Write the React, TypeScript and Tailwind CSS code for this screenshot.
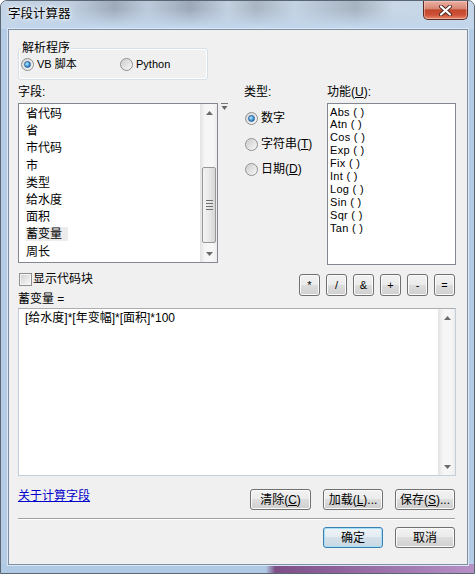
import React from "react";

const ui = "font-['Liberation_Sans','Noto_Sans_CJK_SC',sans-serif] text-[12px] text-black";

const btnNormal =
  "flex items-center justify-center rounded-[3px] border border-[#707070] bg-[linear-gradient(#f2f2f2_0%,#ebebeb_49%,#dddddd_50%,#cfcfcf_100%)] shadow-[inset_0_0_0_1px_#fbfbfb] leading-none";
const btnDefault =
  "flex items-center justify-center rounded-[3px] border border-[#3c7fb1] bg-[linear-gradient(#eef4f8_0%,#e3ecf2_49%,#d4e1ea_50%,#c9d8e3_100%)] shadow-[inset_0_0_0_1px_#a6def7] leading-none";

const fields = ["省代码", "省", "市代码", "市", "类型", "给水度", "面积", "蓄变量", "周长"];
const funcs = ["Abs ( )", "Atn ( )", "Cos ( )", "Exp ( )", "Fix ( )", "Int ( )", "Log ( )", "Sin ( )", "Sqr ( )", "Tan ( )"];
const ops = ["*", "/", "&", "+", "-", "="];

function Radio({ checked }: { checked?: boolean }) {
  return (
    <span className="flex h-[13px] w-[13px] shrink-0 items-center justify-center rounded-full border border-[#8e8f8f] bg-[linear-gradient(135deg,#d4d4d4,#f7f7f7)]">
      {checked ? (
        <span className="h-[7px] w-[7px] rounded-full border border-[#24609c] bg-[radial-gradient(circle_at_35%_35%,#b5e8fd,#3f93d6_60%,#1b5a96)]" />
      ) : (
        <span className="h-[9px] w-[9px] rounded-full bg-[linear-gradient(135deg,#cfcfcf,#f4f4f4)]" />
      )}
    </span>
  );
}

function Arrow({ up }: { up?: boolean }) {
  return (
    <svg width="7" height="4" viewBox="0 0 7 4">
      <path d={up ? "M0 4 L3.5 0 L7 4 Z" : "M0 0 L7 0 L3.5 4 Z"} fill="#6b6b6b" />
    </svg>
  );
}

function ScrollBar({ thumb }: { thumb?: boolean }) {
  return (
    <div className="flex w-[17px] shrink-0 flex-col border-l border-[#e4e4e4] bg-[linear-gradient(90deg,#e6e6e6,#f6f6f6_25%,#f6f6f6_75%,#ececec)]">
      <div className="flex h-[17px] items-center justify-center">
        <Arrow up />
      </div>
      <div className="flex-1">
        {thumb && (
          <div className="mx-[1px] mt-[46px] flex h-[76px] flex-col items-center justify-center gap-[2px] rounded-[2px] border border-[#979797] bg-[linear-gradient(90deg,#f4f4f4,#e8e8e8_50%,#d6d6d6)]">
            <span className="h-px w-[7px] bg-[#6f6f6f]" />
            <span className="h-px w-[7px] bg-[#6f6f6f]" />
            <span className="h-px w-[7px] bg-[#6f6f6f]" />
            <span className="h-px w-[7px] bg-[#6f6f6f]" />
          </div>
        )}
      </div>
      <div className="flex h-[17px] items-center justify-center">
        <Arrow />
      </div>
    </div>
  );
}

export default function App() {
  return (
    <div
      className={`${ui} flex h-[574px] w-[475px] flex-col overflow-hidden rounded-t-[7px] border border-[#5a6672] [background:linear-gradient(90deg,#b0c9e4_0%,#b0c9e4_56%,#7d4f86_58%,#b690c6_100%)_bottom/100%_9px_no-repeat,#b5cce6]`}
    >
      {/* TITLE BAR */}
      <div className="flex h-[28px] shrink-0 items-start [background:linear-gradient(180deg,rgba(197,214,233,0)_0%,rgba(197,214,233,0)_30%,#c2d5ea_90%),linear-gradient(90deg,#c5d5e6_0%,#bfcedf_15%,#9eaaba_24%,#bccadb_31%,#9ca8b8_40%,#c2d0df_48%,#a9b5c2_54%,#c4d3e3_62%,#a6b3c1_75%,#c9d7e6_83%,#c5d6e8_100%)]">
        <div className="pl-[7px] pt-[4px] text-[12.5px] leading-[18px] [text-shadow:0_0_6px_#fff,0_0_3px_#fff]">字段计算器</div>
        <div className="ml-auto mr-[6px] flex h-[19px] w-[45px] items-center justify-center rounded-b-[5px] border border-t-0 border-[#5b2b23] bg-[linear-gradient(#eab0a2_0%,#d98775_42%,#c2472d_50%,#cf5238_78%,#e58d70_100%)] shadow-[inset_0_0_0_1px_rgba(255,210,200,0.5)]">
          <svg width="13" height="11" viewBox="0 0 13 11">
            <path d="M2 1.5 L11 9.5 M11 1.5 L2 9.5" stroke="#4a2a24" strokeWidth="4" strokeLinecap="round" />
            <path d="M2 1.5 L11 9.5 M11 1.5 L2 9.5" stroke="#ffffff" strokeWidth="2.2" strokeLinecap="round" />
          </svg>
        </div>
      </div>

      {/* FRAME + CLIENT */}
      <div className="flex flex-1 pb-[8px] pl-[7px] pr-[6px]">
        <div className="flex flex-1 flex-col border border-[#7f8fa3] bg-[#f0f0f0] pl-[9px] pr-[11px] shadow-[0_0_0_1px_#dce8f4]">
          {/* parser group */}
          <fieldset className="mt-[10px] w-[190px] rounded-[3px] border border-[#d5dfe5] pb-[7px] shadow-[inset_0_0_0_1px_#fff]">
            <legend className="ml-[2px] px-[1px] leading-[16px]">解析程序</legend>
            <div className="flex h-[16px] items-center pl-[2px]">
              <div className="flex w-[99px] items-center gap-[3px]">
                <Radio checked />
                <span className="text-[11px]">VB 脚本</span>
              </div>
              <div className="flex items-center gap-[3px]">
                <Radio />
                <span className="text-[11px]">Python</span>
              </div>
            </div>
          </fieldset>

          {/* fields / type / functions */}
          <div className="mt-[4px] flex">
            <div className="flex w-[200px] flex-col">
              <div className="leading-[16px]">字段:</div>
              <div className="mt-[3px] flex h-[160px] border border-[#828790] bg-white">
                <div className="flex-1 pl-[7px] pt-[2px] leading-[17.2px]">
                  {fields.map((f) => (
                    <div key={f}>
                      <span className={f === "蓄变量" ? "bg-[#ececec] pr-[6px]" : ""}>{f}</span>
                    </div>
                  ))}
                </div>
                <ScrollBar thumb />
              </div>
            </div>

            <div className="w-[26px]">
              <svg className="ml-[3px] mt-[19px]" width="7" height="8" viewBox="0 0 7 8">
                <path d="M0 0.5 H7" stroke="#777" strokeWidth="1" />
                <path d="M0.5 3 H6.5 L3.5 7 Z" fill="#666" />
              </svg>
            </div>

            <div className="flex w-[83px] flex-col">
              <div className="leading-[16px]">类型:</div>
              <div className="mt-[10px] flex h-[16px] items-center gap-[3px] pl-[1px]">
                <Radio checked />
                <span>数字</span>
              </div>
              <div className="mt-[10px] flex h-[16px] items-center gap-[3px] pl-[1px]">
                <Radio />
                <span>
                  字符串(<u>T</u>)
                </span>
              </div>
              <div className="mt-[9px] flex h-[16px] items-center gap-[3px] pl-[1px]">
                <Radio />
                <span>
                  日期(<u>D</u>)
                </span>
              </div>
            </div>

            <div className="flex flex-1 flex-col">
              <div className="leading-[16px]">
                功能(<u>U</u>):
              </div>
              <div className="mt-[3px] h-[162px] border border-[#828790] bg-white pl-[2px] pt-[1.5px] text-[11px] leading-[12.9px] tracking-[0.3px]">
                {funcs.map((f) => (
                  <div key={f}>{f}</div>
                ))}
              </div>
            </div>
          </div>

          {/* code block + operators */}
          <div className="flex items-start justify-between">
            <div className="flex flex-col">
              <div className="mt-[6px] flex h-[16px] items-center gap-[1px] pl-[1px]">
                <span className="flex h-[13px] w-[13px] items-center justify-center border border-[#8e8f8f] bg-[#f4f4f4]">
                  <span className="h-[9px] w-[9px] bg-[linear-gradient(135deg,#d2d2d2,#f7f7f7)]" />
                </span>
                <span>显示代码块</span>
              </div>
              <div className="mt-[4px] leading-[16px]">蓄变量 =</div>
            </div>
            <div className="mr-[1px] mt-[9px] flex gap-[6px]">
              {ops.map((o) => (
                <div key={o} className={`${btnNormal} h-[22px] w-[21px] text-[11px]`}>
                  {o}
                </div>
              ))}
            </div>
          </div>

          {/* expression */}
          <div className="mt-[1px] flex h-[168px] border border-[#c3cfdb] border-t-[#abadb3] bg-white">
            <div className="flex-1 pl-[6px] pt-[1px] leading-[16px]">[给水度]*[年变幅]*[面积]*100</div>
            <ScrollBar />
          </div>

          {/* about + clear/load/save */}
          <div className="mt-[12px] flex items-start">
            <span className="leading-[16px] text-[#0000cc] underline">关于计算字段</span>
            <div className="ml-auto mr-[1px] mt-[1px] flex gap-[12px]">
              <div className={`${btnNormal} h-[21px] w-[61px]`}>
                清除(<u>C</u>)
              </div>
              <div className={`${btnNormal} h-[21px] w-[60px]`}>
                加载(<u>L</u>)...
              </div>
              <div className={`${btnNormal} h-[21px] w-[60px]`}>
                保存(<u>S</u>)...
              </div>
            </div>
          </div>

          <div className="mr-[1px] mt-[8px] border-t border-b border-t-[#a0a0a0] border-b-white" />

          <div className="mr-[1px] mt-[7px] flex justify-end gap-[12px]">
            <div className={`${btnDefault} h-[21px] w-[60px]`}>确定</div>
            <div className={`${btnNormal} h-[21px] w-[60px]`}>取消</div>
          </div>
        </div>
      </div>
    </div>
  );
}
